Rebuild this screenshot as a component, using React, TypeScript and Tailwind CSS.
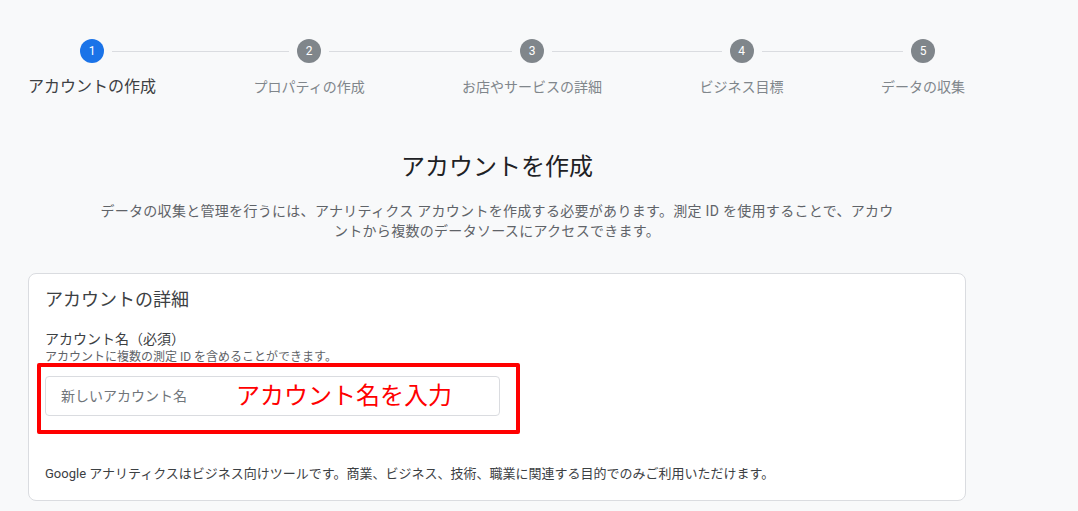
import React from "react";

const steps = [
  { n: 1, label: "アカウントの作成", active: true },
  { n: 2, label: "プロパティの作成" },
  { n: 3, label: "お店やサービスの詳細" },
  { n: 4, label: "ビジネス目標" },
  { n: 5, label: "データの収集" },
];

function Step({ n, label, active, first, last }: { n: number; label: string; active?: boolean; first: boolean; last: boolean }) {
  return (
    <div className="flex flex-col items-stretch">
      <div className="flex items-center h-6">
        <div className={`flex-1 h-px mr-2 ${first ? "bg-transparent" : "bg-[#dadce0]"}`} />
        <div
          className={`w-6 h-6 rounded-full flex items-center justify-center text-white text-[12px] ${
            active ? "bg-[#1a73e8]" : "bg-[#80868b]"
          }`}
        >
          {n}
        </div>
        <div className={`flex-1 h-px ml-2 ${last ? "bg-transparent" : "bg-[#dadce0]"}`} />
      </div>
      <div
        className={`mt-3 leading-6 whitespace-nowrap text-center ${
          active ? "text-[16px] text-[#3c4043]" : "text-[14px] text-[#80868b]"
        }`}
      >
        {label}
      </div>
    </div>
  );
}

export default function App() {
  return (
    <div
      className="min-h-[511px] bg-[#f8f9fa] pt-[39px]"
      style={{ fontFamily: 'Roboto, "Noto Sans CJK JP", sans-serif' }}
    >
      <div className="ml-[28px] w-[938px]">
        <div className="flex w-[937px]">
          {steps.map((s, i) => (
            <React.Fragment key={s.n}>
              <Step n={s.n} label={s.label} active={s.active} first={i === 0} last={i === steps.length - 1} />
              {i < steps.length - 1 && (
                <div className="flex-1 h-6 flex items-center">
                  <div className="w-full h-px bg-[#dadce0]" />
                </div>
              )}
            </React.Fragment>
          ))}
        </div>

        <h1 className="mt-[52px] text-center text-[24px] leading-8 text-[#202124]">アカウントを作成</h1>
        <p className="mt-[18px] text-center text-[14px] leading-5 tracking-[0.3px] text-[#5f6368]">
          データの収集と管理を行うには、アナリティクス アカウントを作成する必要があります。測定 ID を使用することで、アカウ
          <br />
          ントから複数のデータソースにアクセスできます。
        </p>

        <div className="mt-[32px] bg-white border border-[#dadce0] rounded-lg px-4 pt-[14px] pb-[16px]">
          <h2 className="text-[18px] leading-6 text-[#3c4043]">アカウントの詳細</h2>
          <div className="mt-[17px] text-[14px] leading-5 text-[#3c4043]">アカウント名（必須）</div>
          <div className="text-[12px] leading-4 text-[#5f6368]">アカウントに複数の測定 ID を含めることができます。</div>
          <div className="relative mt-[11px] w-[455px]">
            <div className="h-[40px] border border-[#dadce0] rounded bg-white flex items-center px-[15px] text-[14px] text-[#70757a]">
              新しいアカウント名
            </div>
            <div className="absolute left-[-8px] top-[-13px] right-[-20px] bottom-[-18px] border-[4px] border-[#ff0000] rounded-[2px] pointer-events-none" />
            <div className="absolute left-[191px] top-[6px] text-[24px] leading-7 text-[#ff0000] whitespace-nowrap">
              アカウント名を入力
            </div>
          </div>
          <div className="mt-[48px] text-[13px] leading-5 text-[#3c4043]">
            Google アナリティクスはビジネス向けツールです。商業、ビジネス、技術、職業に関連する目的でのみご利用いただけます。
          </div>
        </div>
      </div>
    </div>
  );
}
